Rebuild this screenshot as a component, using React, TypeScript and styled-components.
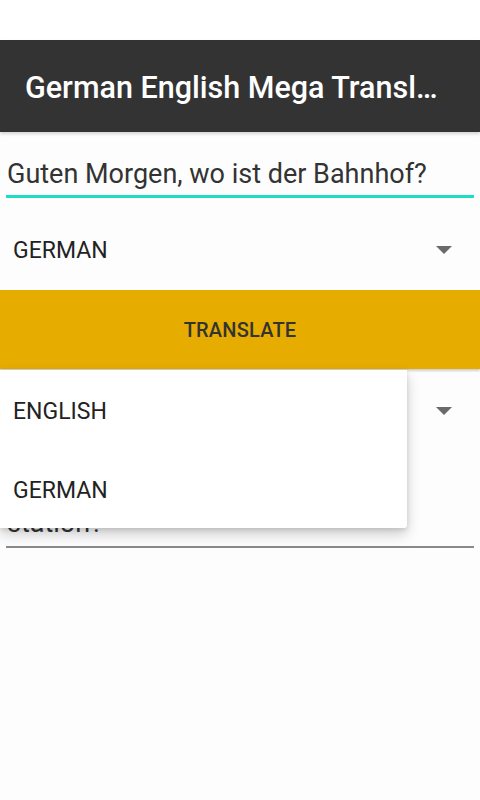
import React from "react";
import styled, { createGlobalStyle } from "styled-components";

const GlobalStyle = createGlobalStyle`
  html, body {
    margin: 0;
    padding: 0;
    background: #fdfdfd;
    font-family: Roboto, "Noto Sans", "Liberation Sans", sans-serif;
  }
`;

const Screen = styled.div`
  width: 480px;
  min-height: 800px;
  display: flex;
  flex-direction: column;
  overflow: hidden;
`;

const StatusSpace = styled.div`
  height: 40px;
  background: #ffffff;
`;

const Toolbar = styled.header`
  height: 92px;
  box-sizing: border-box;
  padding: 4px 25px 0;
  background: #333333;
  display: flex;
  align-items: center;
  box-shadow: 0 2px 3px rgba(0, 0, 0, 0.16);
  position: relative;
  z-index: 1;
`;

const Title = styled.h1`
  margin: 0;
  color: #ffffff;
  font-size: 30.5px;
  font-weight: 500;
  white-space: nowrap;
  overflow: hidden;
  text-overflow: ellipsis;
  max-width: 420px;
  line-height: 40px;
`;

const Field = styled.div<{ $focused?: boolean; $height: number }>`
  margin: 0 6px;
  height: ${(p) => p.$height}px;
  display: flex;
  flex-direction: column;
  justify-content: flex-end;
  border-bottom: ${(p) => (p.$focused ? "3px solid #1fdcc6" : "2px solid #8a8a8a")};
  box-sizing: border-box;
  padding-bottom: ${(p) => (p.$focused ? 4 : 6)}px;
`;

const FieldText = styled.div`
  color: #333333;
  font-size: 27px;
  line-height: 34px;
  padding-left: 1px;
`;

const SpinnerRow = styled.div<{ $height: number; $shift: number }>`
  height: ${(p) => p.$height}px;
  box-sizing: border-box;
  padding: ${(p) => p.$shift}px 28px 0 13px;
  display: flex;
  align-items: center;
  justify-content: space-between;
`;

const SpinnerLabel = styled.span`
  color: #222222;
  font-size: 23px;
`;

const Arrow = styled.span`
  width: 0;
  height: 0;
  border-left: 8px solid transparent;
  border-right: 8px solid transparent;
  border-top: 8px solid #6a6a6a;
`;

const TranslateButton = styled.button`
  height: 79px;
  width: 100%;
  border: none;
  background: #e6ac00;
  color: #333333;
  font-family: inherit;
  font-size: 20px;
  font-weight: 500;
  letter-spacing: 0.2px;
  box-shadow: 0 2px 2px rgba(0, 0, 0, 0.18);
  position: relative;
  z-index: 1;
`;

const Lower = styled.div`
  position: relative;
`;

const Popup = styled.ul`
  position: absolute;
  top: 1px;
  left: 0;
  width: 407px;
  height: 158px;
  margin: 0;
  padding: 0;
  list-style: none;
  background: #ffffff;
  border-radius: 0 0 3px 0;
  box-shadow: 0 6px 14px rgba(0, 0, 0, 0.2), 0 2px 4px rgba(0, 0, 0, 0.1);
  z-index: 2;
  display: flex;
  flex-direction: column;
`;

const PopupItem = styled.li`
  height: 79px;
  box-sizing: border-box;
  padding: 4px 0 0 13px;
  display: flex;
  align-items: center;
  color: #222222;
  font-size: 23px;
`;

export default function App() {
  return (
    <>
      <GlobalStyle />
      <Screen>
        <StatusSpace />
        <Toolbar>
          <Title>German English Mega Translator</Title>
        </Toolbar>
        <Field $focused $height={66}>
          <FieldText>Guten Morgen, wo ist der Bahnhof?</FieldText>
        </Field>
        <SpinnerRow $height={92} $shift={12}>
          <SpinnerLabel>GERMAN</SpinnerLabel>
          <Arrow />
        </SpinnerRow>
        <TranslateButton>TRANSLATE</TranslateButton>
        <Lower>
          <SpinnerRow $height={80} $shift={4}>
            <SpinnerLabel>ENGLISH</SpinnerLabel>
            <Arrow />
          </SpinnerRow>
          <Field $height={99}>
            <FieldText>
              Good morning, where is the train
              <br />
              station?
            </FieldText>
          </Field>
          <Popup>
            <PopupItem>ENGLISH</PopupItem>
            <PopupItem>GERMAN</PopupItem>
          </Popup>
        </Lower>
      </Screen>
    </>
  );
}
